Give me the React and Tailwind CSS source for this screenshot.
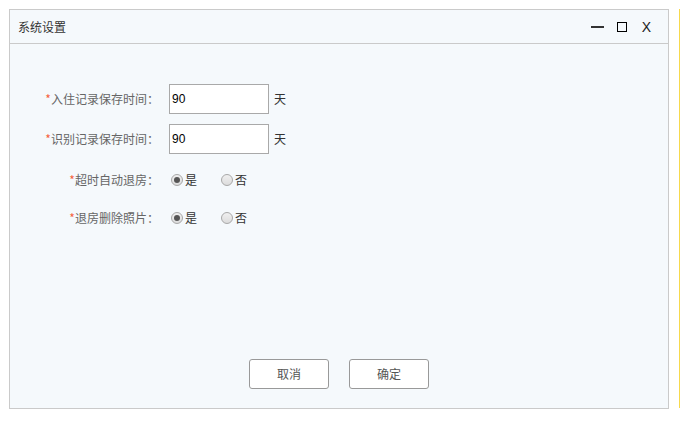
const font = { fontFamily: '"Microsoft YaHei", "Noto Sans CJK SC", "Liberation Sans", sans-serif' };

const Label = ({ children }) => (
    <div className="w-[149px] shrink-0 text-right text-[12px] text-[#666]">
        <span className="text-[#f5633c]">*</span>
        {children}：
    </div>
);

const DayInput = ({ value }) => (
    <div className="flex items-center">
        <input
            defaultValue={value}
            className="ml-[10px] w-[100px] h-[30px] border border-[#a9a9a9] bg-white px-[2px] text-[12px] text-black outline-none"
            style={{ fontFamily: '"Liberation Sans", Arial, sans-serif' }}
        />
        <span className="ml-[5px] text-[12px] text-[#333]">天</span>
    </div>
);

const Radio = ({ checked, label }) => (
    <label className="flex items-center">
        <span className="w-[12px] h-[12px] rounded-full border border-[#a8a8a8] bg-gradient-to-b from-[#f0f0f0] to-[#dcdcdc] flex items-center justify-center">
            {checked && <span className="w-[6px] h-[6px] rounded-full bg-[#555]" />}
        </span>
        <span className="ml-[2px] text-[12px] text-[#333]">{label}</span>
    </label>
);

const RadioRow = ({ label, className }) => (
    <div className={"flex items-center h-[30px] " + className}>
        <Label>{label}</Label>
        <div className="flex items-center ml-[12px] gap-[24px]">
            <Radio checked label="是" />
            <Radio label="否" />
        </div>
    </div>
);

export default function App() {
    return (
        <div className="w-[680px] h-[424px] bg-white flex pt-[9px] pl-[9px]" style={font}>
            <div className="w-[660px] h-[400px] border border-[#cacaca] bg-[#f5f9fc] flex flex-col">
                <header className="h-[34px] border-b border-[#cacaca] flex items-center justify-between pl-[8px] pr-[17px]">
                    <span className="text-[12px] text-[#333]">系统设置</span>
                    <div className="flex items-center">
                        <span className="w-[13px] h-[1.5px] bg-[#333] mt-[1px]" />
                        <span className="ml-[13px] w-[10px] h-[10px] border-[1.5px] border-black" />
                        <span className="ml-[15px] text-[14px] text-[#222] leading-none" style={{ fontFamily: '"Liberation Sans", Arial, sans-serif' }}>X</span>
                    </div>
                </header>

                <div className="flex-1 flex flex-col pt-[40px]">
                    <div className="flex items-center h-[30px]">
                        <Label>入住记录保存时间</Label>
                        <DayInput value="90" />
                    </div>
                    <div className="flex items-center h-[30px] mt-[10px]">
                        <Label>识别记录保存时间</Label>
                        <DayInput value="90" />
                    </div>
                    <RadioRow label="超时自动退房" className="mt-[11px]" />
                    <RadioRow label="退房删除照片" className="mt-[8px]" />
                </div>

                <div className="flex justify-center gap-[20px] pb-[19px]">
                    <button className="w-[80px] h-[30px] rounded-[3px] border border-[#999] bg-white text-[12px] text-[#555]">取消</button>
                    <button className="w-[80px] h-[30px] rounded-[3px] border border-[#999] bg-white text-[12px] text-[#555]">确定</button>
                </div>
            </div>
            <div className="ml-[10px] w-px h-[399px] bg-[#f7d94c]" />
        </div>
    );
}
